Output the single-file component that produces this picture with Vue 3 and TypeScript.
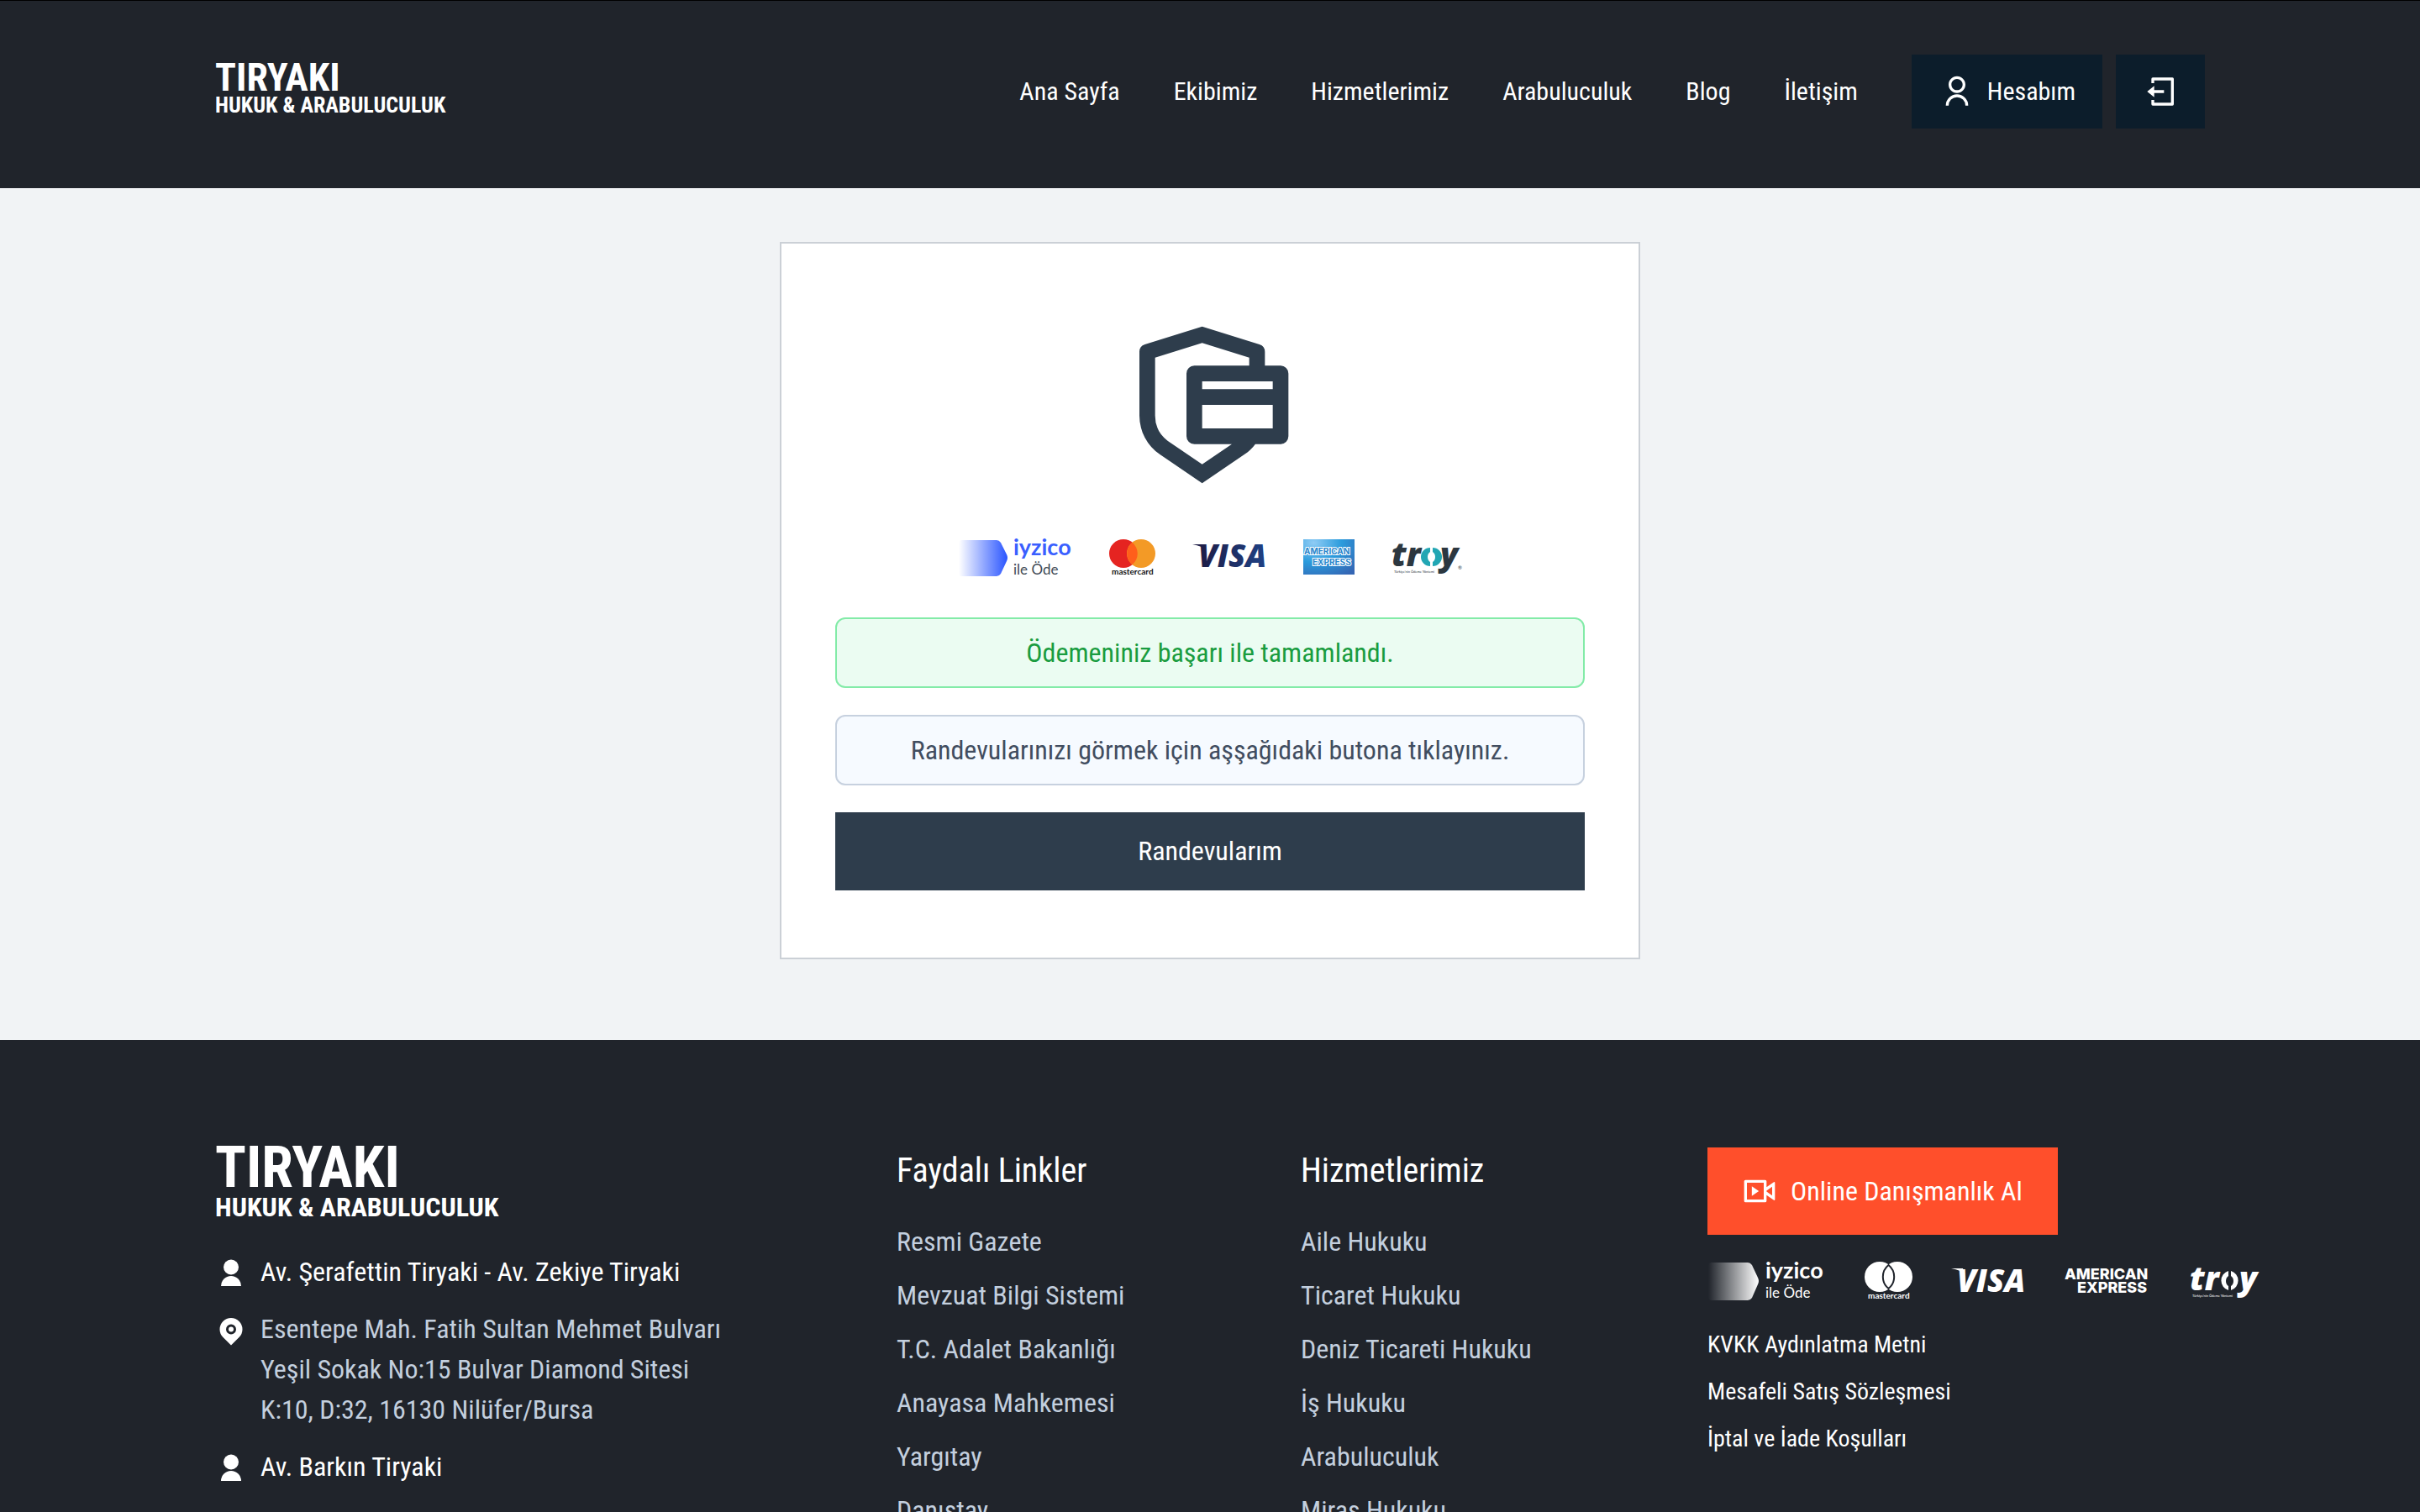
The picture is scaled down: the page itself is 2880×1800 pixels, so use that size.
<script setup lang="ts">
interface NavItem { label: string; href: string }

const nav: NavItem[] = [
  { label: 'Ana Sayfa', href: '#' },
  { label: 'Ekibimiz', href: '#ekibimiz' },
  { label: 'Hizmetlerimiz', href: '#hizmetlerimiz' },
  { label: 'Arabuluculuk', href: '#arabuluculuk' },
  { label: 'Blog', href: '#blog' },
  { label: 'İletişim', href: '#iletisim' },
]

const usefulLinks: string[] = [
  'Resmi Gazete', 'Mevzuat Bilgi Sistemi', 'T.C. Adalet Bakanlığı',
  'Anayasa Mahkemesi', 'Yargıtay', 'Danıştay',
]
const services: string[] = [
  'Aile Hukuku', 'Ticaret Hukuku', 'Deniz Ticareti Hukuku',
  'İş Hukuku', 'Arabuluculuk', 'Miras Hukuku',
]
const legal: string[] = ['KVKK Aydınlatma Metni', 'Mesafeli Satış Sözleşmesi', 'İptal ve İade Koşulları']
</script>

<template>
  <div class="page">
    <header class="header">
      <div class="container header-row">
        <a href="#" class="brand">
          <span class="brand-name">TIRYAKI</span>
          <span class="brand-sub">HUKUK &amp; ARABULUCULUK</span>
        </a>
        <nav class="nav">
          <a v-for="n in nav" :key="n.label" :href="n.href">{{ n.label }}</a>
        </nav>
        <div class="account">
          <button type="button" class="dark-btn">
            <svg width="40" height="40" viewBox="0 0 24 24" fill="currentColor">
              <path d="M4 22a8 8 0 1 1 16 0h-2a6 6 0 1 0-12 0H4zm8-9c-3.315 0-6-2.685-6-6s2.685-6 6-6 6 2.685 6 6-2.685 6-6 6zm0-2c2.210 0 4-1.790 4-4s-1.790-4-4-4-4 1.790-4 4 1.790 4 4 4z" />
            </svg>
            <span>Hesabım</span>
          </button>
          <button type="button" class="dark-btn" aria-label="Çıkış">
            <svg width="40" height="40" viewBox="-1 0 24 24" fill="currentColor">
              <path d="M4 18h2v2h12V4H6v2H4V3a1 1 0 0 1 1-1h14a1 1 0 0 1 1 1v18a1 1 0 0 1-1 1H5a1 1 0 0 1-1-1v-3zm2-7h7v2H6v3l-5-4 5-4v3z" />
            </svg>
          </button>
        </div>
      </div>
    </header>

    <main class="main">
      <section class="card">
        <svg class="shield" viewBox="0 0 24 24" fill="currentColor" fill-rule="evenodd">
          <path d="M11 2l7.298 2.280a1 1 0 0 1 .702.955V7h2a1 1 0 0 1 1 1v8a1 1 0 0 1-1 1h-3.220c-.387.510-.857.960-1.400 1.330L11 22l-5.380-3.668A6 6 0 0 1 3 13.374V5.235a1 1 0 0 1 .702-.954L11 2zm0 2.094L5 5.970v7.404a4 4 0 0 0 1.558 3.169l.189.136L11 19.580 14.782 17H10a1 1 0 0 1-1-1V8a1 1 0 0 1 1-1h7V5.970l-6-1.876zM11 12v3h9v-3h-9zm0-2h9V9h-9v1z" />
        </svg>

        <svg class="pay" viewBox="0 0 600 48" role="img" aria-label="Ödeme yöntemleri">
          <defs>
            <linearGradient id="iyzi" x1="0" x2="1"><stop offset="0" stop-color="#2a55ff" stop-opacity="0" /><stop offset="1" stop-color="#2a55ff" /></linearGradient>
            <linearGradient id="visa" x1="0" x2="1"><stop offset="0" stop-color="#1d1c45" /><stop offset="1" stop-color="#1f4286" /></linearGradient>
            <radialGradient id="amex" cx=".2" cy=".1" r="1.100"><stop offset="0" stop-color="#8fccf5" /><stop offset=".5" stop-color="#2a9bdc" /><stop offset="1" stop-color="#3466b4" /></radialGradient>
          </defs>
          <path d="M5 3H46Q49 3 51 6L58 20Q60 24 58 28L51 43Q49 46 46 46H5Q1 46 1 42V7Q1 3 5 3z" fill="url(#iyzi)" />
          <text x="66" y="21" class="t-iyzico" fill="#3a5fff">iyzico</text>
          <text x="66" y="44" class="t-ode" fill="#414a55">ile Öde</text>
          <circle cx="197" cy="19" r="17" fill="#e52421" /><circle cx="218" cy="19" r="17" fill="#f39a26" />
          <path d="M207.500 5.800a17 17 0 0 1 0 26.400a17 17 0 0 1 0-26.400z" fill="#ff5f1b" />
          <text x="183" y="44" class="t-mc" fill="#111">mastercard</text>
          <path d="M279 8h14l2 7q-4-5-16-7z" fill="#1d1c45" />
          <text x="286" y="35" class="t-visa" fill="url(#visa)">VISA</text>
          <rect x="411" y="2" width="61" height="42" fill="url(#amex)" />
          <text x="412" y="20" class="t-amex-s">AMERICAN</text>
          <text x="422" y="33" class="t-amex-s">EXPRESS</text>
          <g fill="#2c3740">
            <text x="516" y="34" class="t-troy">tr</text><text x="574" y="34" class="t-troy">y</text>
            <text x="519" y="42" class="t-tiny">Türkiye'nin Ödeme Yöntemi</text>
            <text x="595" y="38" class="t-reg">®</text>
          </g>
          <path d="M562 12A11 11 0 0 0 562 34V29Q559 27 559 23T562 17zM565 12A11 11 0 0 1 565 34V29Q568 27 568 23T565 17z" fill="#22a6b3" />
        </svg>

        <p class="note success">Ödemeniniz başarı ile tamamlandı.</p>
        <p class="note info">Randevularınızı görmek için aşşağıdaki butona tıklayınız.</p>
        <button type="button" class="primary">Randevularım</button>
      </section>
    </main>

    <footer class="footer">
      <div class="container footer-grid">
        <div class="about">
          <a href="#" class="brand large">
            <span class="brand-name">TIRYAKI</span>
            <span class="brand-sub">HUKUK &amp; ARABULUCULUK</span>
          </a>
          <ul class="contacts">
            <li>
              <svg viewBox="0 0 24 24" fill="currentColor"><circle cx="12" cy="7" r="6" /><path d="M4 22a8 8 0 0 1 16 0z" /></svg>
              <strong>Av. Şerafettin Tiryaki - Av. Zekiye Tiryaki</strong>
            </li>
            <li>
              <svg viewBox="0 0 24 24" fill="currentColor" fill-rule="evenodd"><path d="M18.364 17.364L12 23.728l-6.364-6.364a9 9 0 1 1 12.728 0zM12 15a4 4 0 1 0 0-8 4 4 0 0 0 0 8zm0-2a2 2 0 1 1 0-4 2 2 0 0 1 0 4z" /></svg>
              <address>Esentepe Mah. Fatih Sultan Mehmet Bulvarı<br />Yeşil Sokak No:15 Bulvar Diamond Sitesi<br />K:10, D:32, 16130 Nilüfer/Bursa</address>
            </li>
            <li>
              <svg viewBox="0 0 24 24" fill="currentColor"><circle cx="12" cy="7" r="6" /><path d="M4 22a8 8 0 0 1 16 0z" /></svg>
              <strong>Av. Barkın Tiryaki</strong>
            </li>
          </ul>
        </div>

        <div class="links">
          <h2>Faydalı Linkler</h2>
          <ul><li v-for="l in usefulLinks" :key="l"><a href="#">{{ l }}</a></li></ul>
        </div>
        <div class="links">
          <h2>Hizmetlerimiz</h2>
          <ul><li v-for="l in services" :key="l"><a href="#">{{ l }}</a></li></ul>
        </div>

        <div class="side">
          <button type="button" class="cta">
            <svg width="40" height="40" viewBox="0 0 24 24" fill="currentColor" fill-rule="evenodd">
              <path d="M17 9.200l5.213-3.650a.5.500 0 0 1 .787.410v12.080a.5.500 0 0 1-.787.410L17 14.800V19a1 1 0 0 1-1 1H2a1 1 0 0 1-1-1V5a1 1 0 0 1 1-1h14a1 1 0 0 1 1 1v4.200zm0 3.159l4 2.800V8.840l-4 2.800v.718zM3 6v12h12V6H3zm3.500 2.500l5 3.500-5 3.500z" />
            </svg>
            <span>Online Danışmanlık Al</span>
          </button>
          <svg class="pay-mono" viewBox="0 0 660 48" fill="#fff" role="img" aria-label="Ödeme yöntemleri">
            <defs>
              <linearGradient id="iyziw" x1="0" x2="1"><stop offset="0" stop-color="#fff" stop-opacity="0" /><stop offset="1" stop-color="#fff" /></linearGradient>
            </defs>
            <path d="M5 1H48Q51 1 53 4L60 19Q62 23 60 27L53 43Q51 46 48 46H5Q1 46 1 42V5Q1 1 5 1z" fill="url(#iyziw)" />
            <text x="69" y="20" class="t-iyzico">iyzico</text>
            <text x="69" y="43" class="t-ode">ile Öde</text>
            <circle cx="205" cy="18" r="18" /><circle cx="226" cy="18" r="18" />
            <path d="M215.500 4a18 18 0 0 1 0 28a18 18 0 0 1 0-28z" stroke="#20242c" stroke-width="2" />
            <text x="191" y="44" class="t-mc">mastercard</text>
            <path d="M290 8h14l2 7q-4-5-16-7z" />
            <text x="297" y="36" class="t-visa">VISA</text>
            <text x="425" y="21" class="t-amex">AMERICAN</text>
            <text x="440" y="37" class="t-amex">EXPRESS</text>
            <text x="574" y="34" class="t-troy">tr</text><text x="633" y="34" class="t-troy">y</text>
            <text x="577" y="42" class="t-tiny">Türkiye'nin Ödeme Yöntemi</text>
            <path d="M620 11A12 12 0 0 0 620 34V29Q617 27 617 23T620 17zM623 11A12 12 0 0 1 623 34V29Q626 27 626 23T623 17z" />
          </svg>
          <ul class="legal"><li v-for="l in legal" :key="l"><a href="#">{{ l }}</a></li></ul>
        </div>
      </div>
    </footer>
  </div>
</template>

<style>
body { margin: 0; overflow: hidden; background: #20242b; }
</style>

<style scoped>
.page {
  font-family: "Roboto Condensed", "Liberation Sans Narrow", Roboto, sans-serif;
  font-size: 32px;
  line-height: 48px;
  background: #f1f3f5;
  height: 100vh;
  overflow: hidden;
}
a { color: inherit; text-decoration: none; }
ul { list-style: none; margin: 0; padding: 0; }
button { font: inherit; border: 0; color: #fff; cursor: pointer; }
.container { padding: 0 256px; }

.header { background: #20242b; color: #fff; border-top: 1px solid #000; }
.header-row { display: flex; align-items: center; height: 223px; box-sizing: border-box; padding-bottom: 8px; }
.brand { display: flex; flex-direction: column; font-weight: 700; color: #fff; margin-right: auto; padding-bottom: 8px; }
.brand-name { font-size: 46px; line-height: 40px; }
.brand-sub { font-size: 26px; line-height: 26px; }
.nav { display: flex; gap: 64px; font-size: 30px; margin-right: 64px; }
.account { display: flex; gap: 16px; font-size: 30px; }
.dark-btn { display: flex; align-items: center; justify-content: center; gap: 16px; height: 88px; padding: 0 32px 0 34px; background: #0c1d2b; }

.main { display: flex; justify-content: center; padding: 64px 0 96px; }
.card { width: 1024px; box-sizing: border-box; padding: 80px 64px 80px; border: 2px solid #cbd0d6; background: #fff; display: flex; flex-direction: column; align-items: center; }
.shield { width: 224px; height: 224px; color: #2e3d4c; }
.pay { width: 600px; height: 48px; margin: 46px 0 47px; overflow: visible; }
.note { width: 100%; box-sizing: border-box; margin: 0 0 32px; padding: 16px; border: 2px solid; border-radius: 12px; text-align: center; }
.success { color: #1a9c40; background: #ebfcf2; border-color: #83eba8; }
.info { color: #414d60; background: #f6faff; border-color: #c7d1df; }
.primary { width: 100%; height: 93px; padding: 0 0 2px; background: #2e3d4c; }

.footer { background: #20242b; color: #fff; padding: 128px 0; }
.footer-grid { display: grid; grid-template-columns: 811fr 481fr 484fr 592fr; }
.footer-grid > div { min-width: 0; }
.large { padding: 1px 0 0; }
.large .brand-name { font-size: 68px; line-height: 46px; }
.large .brand-sub { font-size: 32px; line-height: 48px; }
.contacts { display: grid; gap: 20px; margin-top: 29px; }
.contacts li { display: flex; gap: 16px; }
.contacts svg { width: 36px; height: 36px; margin: 8px 1px 0; flex: none; }
.contacts strong { font-weight: 400; }
address { font-style: normal; color: #c3cfde; white-space: nowrap; }
h2 { margin: 0 0 32px; font-size: 40px; line-height: 56px; font-weight: 400; }
.links ul { display: grid; gap: 16px; color: #c3cfde; }
.cta { display: flex; align-items: center; gap: 17px; height: 104px; padding: 0 42px; background: #ff4f2b; white-space: nowrap; }
.pay-mono { display: block; width: 660px; height: 48px; margin: 32px 0 27px; overflow: visible; }
.legal { display: grid; gap: 8px; font-size: 28px; }

.t-iyzico { font: 700 27px Lato, sans-serif; }
.t-ode { font: 400 17px Lato, sans-serif; }
.t-mc { font: 700 10px Lato, sans-serif; }
.t-visa { font: italic 800 37px "Open Sans", sans-serif; }
.t-amex { font: 800 18px Inter, sans-serif; }
.t-amex-s { font: 700 10px Inter, sans-serif; fill: #2a86cc; stroke: #fff; stroke-width: 2px; paint-order: stroke; }
.t-troy { font: italic 800 39px "Open Sans", sans-serif; }
.t-tiny { font: 400 4px Lato, sans-serif; }
.t-reg { font: 400 6px Lato, sans-serif; }
</style>
